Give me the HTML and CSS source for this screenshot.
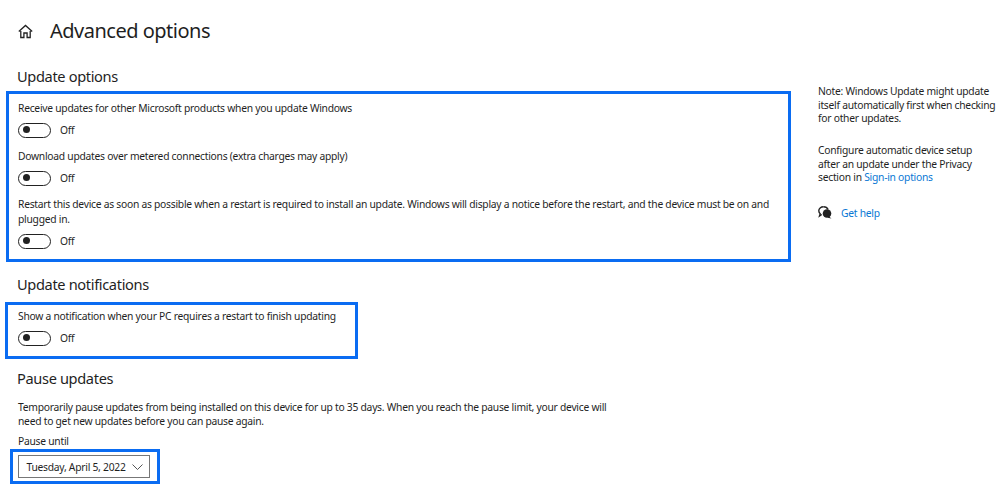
FILE: index.html
```html
<!DOCTYPE html>
<html lang="en">

<head>
  <meta charset="UTF-8">
  <meta name="viewport" content="width=device-width, initial-scale=1.0">
  <title>Advanced options</title>
  <link rel="stylesheet" href="styles.css">
</head>

<body>
  <div class="wrapper">
    <div class="main">
      <div class="title-row">
        <svg class="home-icon" width="15" height="15" viewBox="0 0 15 15" fill="none" stroke="#222" stroke-width="1.3">
          <path d="M.8 7.6 7.500 1.500l6.700 6.100M2.800 5.800V13.500h3.100V9h3.200v4.500h3.100V5.800" />
        </svg>
        <h1>Advanced options</h1>
      </div>

      <h2 class="first">Update options</h2>
      <div class="box box-options">
        <p class="label">Receive updates for other Microsoft products when you update Windows</p>
        <div class="toggle-row"><span class="toggle"></span><span>Off</span></div>
        <p class="label">Download updates over metered connections (extra charges may apply)</p>
        <div class="toggle-row"><span class="toggle"></span><span>Off</span></div>
        <p class="label label-wrap">Restart this device as soon as possible when a restart is required to install an update. Windows will display a notice before the restart, and the device must be on and plugged in.</p>
        <div class="toggle-row"><span class="toggle"></span><span>Off</span></div>
      </div>

      <h2 class="second">Update notifications</h2>
      <div class="box box-notify">
        <p class="label">Show a notification when your PC requires a restart to finish updating</p>
        <div class="toggle-row"><span class="toggle"></span><span>Off</span></div>
      </div>

      <h2 class="third">Pause updates</h2>
      <p class="pause-text">Temporarily pause updates from being installed on this device for up to 35 days. When you reach the pause limit, your device will need to get new updates before you can pause again.</p>
      <p class="pause-label">Pause until</p>
      <div class="box box-date">
        <div class="select">
          <span>Tuesday, April 5, 2022</span>
          <svg width="11" height="6" viewBox="0 0 11 6" fill="none" stroke="#555" stroke-width="1">
            <path d="M.5.5l5 5 5-5" />
          </svg>
        </div>
      </div>
    </div>

    <div class="side">
      <p>Note: Windows Update might update itself automatically first when checking for other updates.</p>
      <p>Configure automatic device setup<br>after an update under the Privacy<br>section in <a href="#">Sign-in options</a></p>
      <div class="help">
        <svg width="14" height="13" viewBox="0 0 14 13">
          <path d="M5.500.8C2.800.8.800 2.500.800 4.800c0 1.200.5 2.200 1.400 3L1.500 10l2.300-1.500" fill="none" stroke="#222" stroke-width="1.400" />
          <path d="M5.500.8c2 0 3.800 1 4.500 2.600" fill="none" stroke="#222" stroke-width="1.400" />
          <circle cx="9" cy="7.500" r="4.300" fill="#222" />
          <path d="M11 10.500l2.500 2-4-.7z" fill="#222" />
        </svg>
        <a href="#">Get help</a>
      </div>
    </div>
  </div>
</body>

</html>
```

FILE: styles.css
```css
body {
  background: #fff;
  color: #1f1f1f;
  margin: 0;
  padding: 0;
  font-family: "Noto Sans", sans-serif;
  font-size: 10.3px;
  letter-spacing: -0.26px;
  line-height: 16px;
  height: 486px;
  overflow: hidden;
}

p {
  margin: 0;
}

a {
  color: #0a78d4;
  text-decoration: none;
}

.wrapper {
  display: flex;
}

.main {
  width: 791px;
  padding-left: 5px;
  flex-shrink: 0;
  box-sizing: border-box;
}

.title-row {
  display: flex;
  align-items: center;
  height: 30px;
  margin: 16px 0 0 13px;
}

.home-icon {
  margin-right: 17px;
}

h1 {
  font-size: 20px;
  letter-spacing: -0.5px;
  font-weight: 400;
  margin: 0;
}

h2 {
  font-size: 14.6px;
  letter-spacing: -0.35px;
  line-height: 20px;
  font-weight: 400;
  margin: 0 0 0 12px;
}

h2.first {
  margin-top: 20px;
  margin-bottom: 5px;
}

h2.second {
  margin-top: 12px;
  margin-bottom: 8px;
}

h2.third {
  margin-top: 9px;
  margin-bottom: 13px;
}

.box {
  border: 3px solid #0a6cf2;
  box-sizing: border-box;
}

.box-options {
  margin-left: 1px;
  height: 171px;
  padding: 6px 9px 0 9px;
}

.box-notify {
  width: 353px;
  height: 57px;
  padding: 3px 9px 0 10px;
}

.label {
  margin-bottom: 6px;
}

.label-wrap {
  line-height: 15px;
  padding-top: 1px;
}

.toggle-row {
  display: flex;
  align-items: center;
  gap: 9px;
  height: 16px;
  margin-bottom: 10px;
}

.toggle {
  display: block;
  position: relative;
  width: 33px;
  height: 15px;
  border: 1.5px solid #222;
  border-radius: 9px;
  box-sizing: border-box;
}

.toggle::before {
  content: "";
  position: absolute;
  left: 4px;
  top: 2.5px;
  width: 7px;
  height: 7px;
  border-radius: 50%;
  background: #222;
}

.pause-text {
  width: 595px;
  margin-left: 13px;
  line-height: 13.5px;
}

.pause-label {
  margin: 5px 0 0 13px;
}

.box-date {
  width: 150px;
  height: 35px;
  margin-left: 5px;
  padding: 3px 7px 3px 5px;
}

.select {
  display: flex;
  align-items: center;
  gap: 6px;
  height: 23px;
  border: 1.5px solid #777;
  padding: 0 0 0 7.5px;
  box-sizing: border-box;
}

.side {
  width: 180px;
  margin-left: 27px;
  padding-top: 85px;
  flex-shrink: 0;
}

.side p {
  line-height: 13.5px;
  margin-bottom: 18.5px;
}

.help {
  display: flex;
  align-items: center;
  gap: 9px;
  margin-top: 20px;
}
```
